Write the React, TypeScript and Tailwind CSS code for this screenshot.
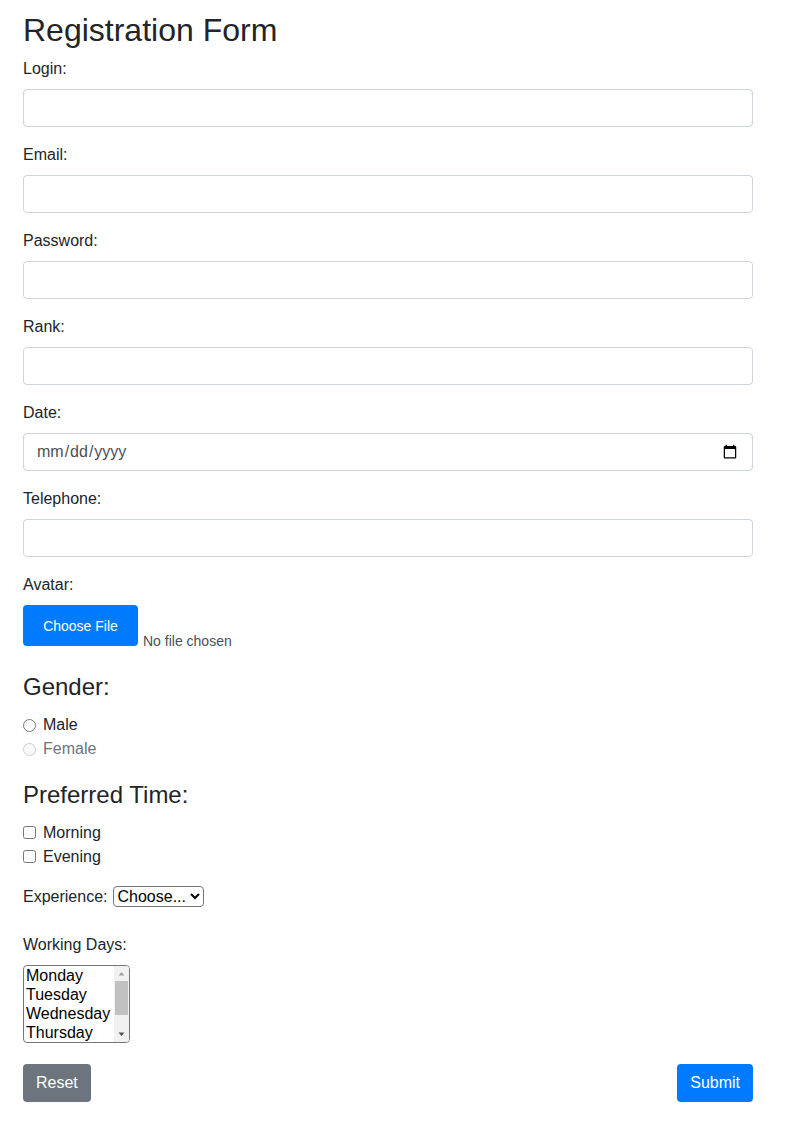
import React from "react";

const textFields = [
  { label: "Login:", type: "text" },
  { label: "Email:", type: "email" },
  { label: "Password:", type: "password" },
  { label: "Rank:", type: "text" },
  { label: "Date:", type: "date" },
  { label: "Telephone:", type: "tel" },
];

const days = ["Monday", "Tuesday", "Wednesday", "Thursday", "Friday", "Saturday", "Sunday"];

export default function App() {
  return (
    <div className="min-h-screen bg-white text-[#212529] font-['Liberation_Sans',Arial,sans-serif] text-base leading-6">
      <form className="ml-[23px] w-[730px] pt-[11px] pb-8" onSubmit={(e) => e.preventDefault()}>
        <h1 className="text-[32px] leading-[1.2] mb-2">Registration Form</h1>

        {textFields.map((f) => (
          <div key={f.label} className="mb-4">
            <label className="block mb-2">{f.label}</label>
            <input
              type={f.type}
              className="block w-full h-[38px] px-3 py-1.5 border border-[#ced4da] rounded bg-white text-[#495057] outline-none font-['Liberation_Sans',Arial,sans-serif]"
            />
          </div>
        ))}

        <div className="mb-4">
          <label className="block mb-2">Avatar:</label>
          <label className="flex items-end cursor-pointer">
            <input type="file" className="hidden" />
            <span className="flex items-center justify-center w-[115px] h-[41px] rounded bg-[#007bff] text-white text-sm">
              Choose File
            </span>
            <span className="ml-[5px] text-sm leading-4 text-[#495057] relative top-[3px]">No file chosen</span>
          </label>
        </div>

        <h4 className="text-2xl leading-[1.2] mt-[27px] mb-[11px]">Gender:</h4>
        <div className="flex items-center h-6">
          <input type="radio" name="gender" className="w-[13px] h-[13px] m-0 mr-[7px]" />
          <label>Male</label>
        </div>
        <div className="flex items-center h-6">
          <input type="radio" name="gender" disabled className="w-[13px] h-[13px] m-0 mr-[7px]" />
          <label className="text-[#6c757d]">Female</label>
        </div>

        <h4 className="text-2xl leading-[1.2] mt-5 mb-[11px]">Preferred Time:</h4>
        <div className="flex items-center h-6">
          <input type="checkbox" className="w-[13px] h-[13px] m-0 mr-[7px]" />
          <label>Morning</label>
        </div>
        <div className="flex items-center h-6">
          <input type="checkbox" className="w-[13px] h-[13px] m-0 mr-[7px]" />
          <label>Evening</label>
        </div>

        <div className="flex items-center h-6 mt-4">
          <label className="mr-[5px]">Experience:</label>
          <select className="h-[21px] border border-[#767676] rounded-sm text-base leading-none font-['Liberation_Sans',Arial,sans-serif] bg-white text-black">
            <option>Choose...</option>
            <option>0-1 years</option>
            <option>1-3 years</option>
            <option>3+ years</option>
          </select>
        </div>

        <div className="mt-6">
          <label className="block mb-2">Working Days:</label>
          <div className="flex w-[107px] h-[78px] border border-[#767676] rounded-sm bg-white text-black overflow-hidden">
            <ul className="flex-1 pl-0.5 leading-[19px]">
              {days.slice(0, 4).map((d) => (
                <li key={d} className="whitespace-nowrap">{d}</li>
              ))}
            </ul>
            <div className="flex flex-col items-center w-[15px] bg-[#f1f1f1]">
              <svg width="15" height="15" viewBox="0 0 15 15">
                <path d="M4.5 9.5 L7.5 6 L10.5 9.5 Z" fill="#a3a3a3" />
              </svg>
              <div className="w-[13px] h-[34px] bg-[#c1c1c1]" />
              <div className="flex-1" />
              <svg width="15" height="15" viewBox="0 0 15 15">
                <path d="M4.5 5.5 L7.5 9 L10.5 5.5 Z" fill="#505050" />
              </svg>
            </div>
          </div>
        </div>

        <div className="flex justify-between mt-[21px]">
          <button type="reset" className="h-[38px] px-[13px] rounded bg-[#6c757d] text-white">
            Reset
          </button>
          <button type="submit" className="h-[38px] px-[13px] rounded bg-[#007bff] text-white">
            Submit
          </button>
        </div>
      </form>
    </div>
  );
}
